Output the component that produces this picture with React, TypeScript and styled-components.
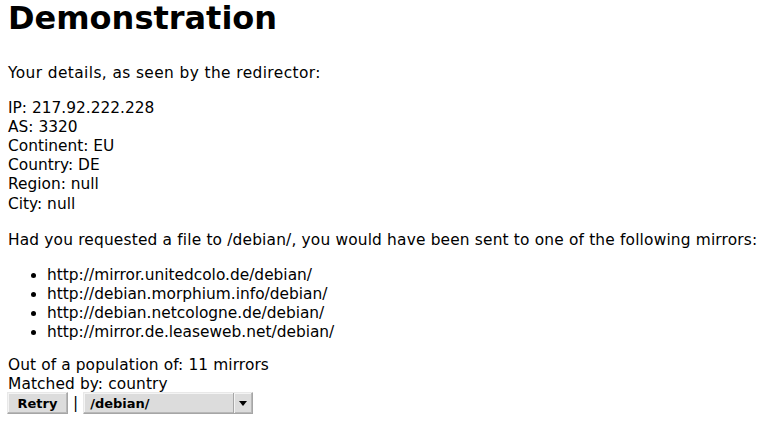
import React from "react";
import styled, { createGlobalStyle } from "styled-components";

const Global = createGlobalStyle`
  html, body { margin: 0; padding: 0; background: #fff; }
  body { font-family: "DejaVu Sans", sans-serif; font-size: 15.4px; color: #000; }
`;

const Page = styled.div`
  padding: 0 0 0 8px;
`;

const Title = styled.h1`
  font-size: 32px;
  font-weight: bold;
  margin: 0 0 27px;
  line-height: 37px;
`;

const Para = styled.p<{ $bottom?: number; $spacing?: number }>`
  margin: 0 0 ${(p) => p.$bottom ?? 15.4}px;
  line-height: 19.2px;
  white-space: nowrap;
  letter-spacing: ${(p) => p.$spacing ?? 0}px;
`;

const List = styled.ul`
  margin: 0 0 14px;
  padding-left: 39px;
  line-height: 19px;
`;

const Controls = styled.div`
  display: flex;
  align-items: center;
  gap: 5px;
  margin: -2px 0 0 -1px;
`;

const Button = styled.button`
  font-family: "DejaVu Sans", sans-serif;
  font-size: 13px;
  font-weight: bold;
  width: 61px;
  height: 22px;
  padding: 0;
  background: #dcdcdc;
  border: 1px solid #a6a6a6;
  border-top-color: #e8e8e8;
  border-left-color: #e8e8e8;
  box-shadow: inset -1px -1px 0 #b8b8b8, inset 1px 1px 0 #f4f4f4;
  border-radius: 0;
  color: #000;
`;

const Sep = styled.span`
  font-size: 15.4px;
  line-height: 19px;
`;

const Select = styled.div`
  display: flex;
  align-items: stretch;
  width: 170px;
  height: 22px;
  box-sizing: border-box;
  border: 1px solid #a6a6a6;
  border-top-color: #e8e8e8;
  border-left-color: #e8e8e8;
  box-shadow: inset -1px -1px 0 #b8b8b8, inset 1px 1px 0 #f4f4f4;
  background: #dcdcdc;
  font-size: 13px;
  font-weight: bold;
`;

const SelectText = styled.span`
  flex: 1;
  display: flex;
  align-items: center;
  padding-left: 6px;
`;

const Arrow = styled.span`
  width: 18px;
  display: flex;
  align-items: center;
  justify-content: center;
  border-left: 1px solid #a6a6a6;
  box-shadow: inset 1px 0 0 #f4f4f4;
  &::after {
    content: "";
    border-left: 4px solid transparent;
    border-right: 4px solid transparent;
    border-top: 5px solid #000;
  }
`;

const mirrors = [
  "http://mirror.unitedcolo.de/debian/",
  "http://debian.morphium.info/debian/",
  "http://debian.netcologne.de/debian/",
  "http://mirror.de.leaseweb.net/debian/",
];

export default function App() {
  return (
    <Page>
      <Global />
      <Title>Demonstration</Title>
      <Para $spacing={0.4}>Your details, as seen by the redirector:</Para>
      <Para $bottom={17}>
        IP: 217.92.222.228<br />
        AS: 3320<br />
        Continent: EU<br />
        Country: DE<br />
        Region: null<br />
        City: null
      </Para>
      <Para $bottom={16} $spacing={0.17}>
        Had you requested a file to /debian/, you would have been sent to one of the following mirrors:
      </Para>
      <List>
        {mirrors.map((m) => (
          <li key={m}>{m}</li>
        ))}
      </List>
      <Para $bottom={0} $spacing={0.1}>
        Out of a population of: 11 mirrors<br />
        Matched by: country
      </Para>
      <Controls>
        <Button>Retry</Button>
        <Sep>|</Sep>
        <Select>
          <SelectText>/debian/</SelectText>
          <Arrow />
        </Select>
      </Controls>
    </Page>
  );
}
